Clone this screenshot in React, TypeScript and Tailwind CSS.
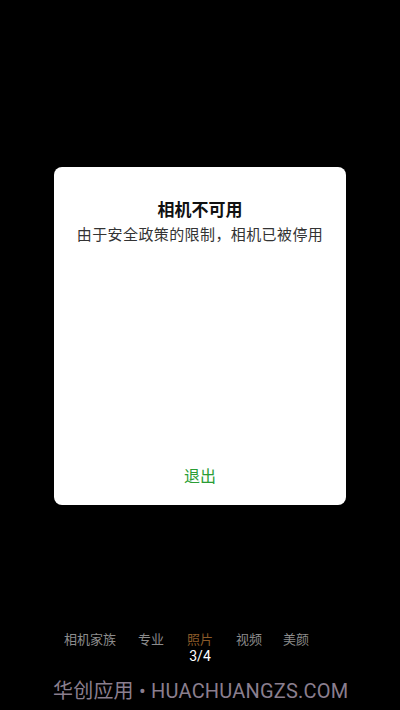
export default function App() {
  const font = { fontFamily: '"Noto Sans CJK SC", "Liberation Sans", sans-serif' };
  return (
    <div className="w-[400px] h-[710px] bg-black flex flex-col overflow-hidden" style={font}>
      <div className="pt-[167px] px-[54px]">
        <div className="h-[338px] bg-white rounded-[8px] flex flex-col items-center">
          <div className="mt-[32px] text-[17px] leading-[20px] font-bold text-[#111]">相机不可用</div>
          <div className="mt-[6px] text-[15px] leading-[18px] text-[#333] tracking-[0.4px]">由于安全政策的限制，相机已被停用</div>
          <div className="flex-1" />
          <div className="mb-[20px] text-[16px] leading-[20px] text-[#2a9d35]">退出</div>
        </div>
      </div>
      <div className="mt-[127px] flex items-center text-[13px] leading-[14px] text-[#8c8c8c]">
        <span className="ml-[64px]">相机家族</span>
        <span className="ml-[22px]">专业</span>
        <span className="ml-[23px] text-[#8a5a28]">照片</span>
        <span className="ml-[23px]">视频</span>
        <span className="ml-[21px]">美颜</span>
      </div>
      <div className="mt-[3px] text-center text-[14px] leading-[14px] text-white" style={{ fontFamily: '"Roboto", sans-serif' }}>3/4</div>
      <div className="mt-[16px] ml-[53px] text-[20px] leading-[24px] text-[#8a7e8e] whitespace-nowrap tracking-[0.2px]" style={{ fontFamily: '"Roboto", "Noto Sans CJK SC", sans-serif' }}>华创应用 • HUACHUANGZS.COM</div>
    </div>
  );
}
